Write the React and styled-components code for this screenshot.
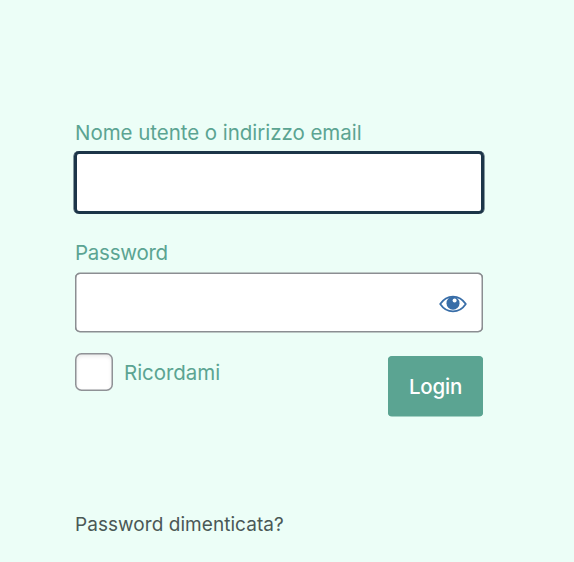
import React from "react";
import styled, { createGlobalStyle } from "styled-components";

const GlobalStyle = createGlobalStyle`
  *, *::before, *::after { box-sizing: border-box; }
  body {
    margin: 0;
    background: #ecfef7;
    font-family: Inter, "Liberation Sans", sans-serif;
  }
`;

const Page = styled.main`
  height: 562px;
  padding: 121px 91px 0 75px;
  overflow: hidden;
  background: #ecfef7;
`;

const Form = styled.form`
  display: flex;
  flex-direction: column;
`;

const Field = styled.div`
  display: flex;
  flex-direction: column;
  height: 120px;
`;

const Label = styled.label`
  font-size: 20.5px;
  line-height: 24px;
  letter-spacing: ${(p) => p.$spacing || "-0.04px"};
  color: #5ba492;
  white-space: nowrap;
`;

const InputBox = styled.div`
  display: flex;
  align-items: center;
  flex-shrink: 0;
  height: ${(p) => (p.$focused ? "63px" : "59px")};
  margin: ${(p) => (p.$focused ? "6px -1px 0" : "8px 0 0")};
  padding-right: 16px;
  border-radius: 5px;
  background: #fff;
  box-shadow: ${(p) =>
    p.$focused
      ? "inset 0 0 0 3px #1c3548, 0.5px 0 0 #1c3548, -0.5px 0 0 #1c3548"
      : "inset 0 0 0 1px #8b8e92, inset 0.5px 0 0 1px #8b8e92, inset -0.5px 0 0 1px #8b8e92, 0 0.5px 0 #8b8e92, 0 -0.5px 0 #8b8e92"};
`;

const Input = styled.input`
  flex: 1;
  min-width: 0;
  height: 100%;
  padding: 0 12px;
  border: 0;
  outline: 0;
  background: transparent;
  font: inherit;
  font-size: 24px;
`;

const RevealButton = styled.button`
  display: flex;
  padding: 2px 0 0;
  border: 0;
  background: none;
`;

const Actions = styled.div`
  display: flex;
  align-items: flex-start;
  justify-content: space-between;
  margin-top: -8px;
`;

const Remember = styled.div`
  display: flex;
  align-items: flex-end;
  gap: 11px;

  ${Label} {
    margin-bottom: 6px;
  }
`;

const Checkbox = styled.input`
  appearance: none;
  width: 38px;
  height: 38px;
  margin: 0;
  border-radius: 6.5px;
  background: #fff;
  box-shadow: inset 0 0 0 1.5px #8f9296, inset 0 2px 4px 1px rgba(0, 0, 0, 0.1);
`;

const LoginButton = styled.button`
  width: 95px;
  height: 60px;
  margin-top: 3px;
  padding: 0;
  border: 0;
  border-radius: 4px;
  background: #5ba492;
  box-shadow: 0 0.5px 0 #5ba492;
  color: #fff;
  font: inherit;
  font-size: 20.5px;
  font-weight: 500;
  letter-spacing: -0.2px;
`;

const ForgotLink = styled.a`
  display: block;
  width: max-content;
  margin-top: 97px;
  color: #4a5856;
  font-size: 19px;
  line-height: 24px;
  letter-spacing: 0.05px;
  text-decoration: none;
`;

function EyeIcon() {
  return (
    <svg width="28" height="18" viewBox="0 0 28 18" aria-hidden="true">
      <path
        d="M1.2 9C7.8-.9 20.2-.9 26.8 9 20.2 18.9 7.8 18.9 1.2 9Z"
        fill="#fff"
        stroke="#396ea8"
        strokeWidth="1.8"
        strokeLinejoin="round"
      />
      <circle cx="14" cy="8.2" r="6.5" fill="#396ea8" />
      <circle cx="15.6" cy="5.5" r="2" fill="#fff" />
    </svg>
  );
}

export default function App() {
  return (
    <Page>
      <GlobalStyle />
      <Form onSubmit={(e) => e.preventDefault()}>
        <Field>
          <Label htmlFor="user">Nome utente o indirizzo email</Label>
          <InputBox $focused>
            <Input id="user" type="text" />
          </InputBox>
        </Field>
        <Field>
          <Label htmlFor="password" $spacing="-0.25px">Password</Label>
          <InputBox>
            <Input id="password" type="password" />
            <RevealButton type="button" aria-label="Mostra password">
              <EyeIcon />
            </RevealButton>
          </InputBox>
        </Field>
        <Actions>
          <Remember>
            <Checkbox id="remember" type="checkbox" />
            <Label htmlFor="remember">Ricordami</Label>
          </Remember>
          <LoginButton type="submit">Login</LoginButton>
        </Actions>
      </Form>
      <ForgotLink href="#">Password dimenticata?</ForgotLink>
    </Page>
  );
}
